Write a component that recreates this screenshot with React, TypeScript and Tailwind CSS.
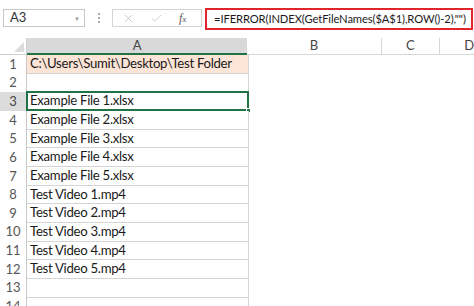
import { X, Check } from "lucide-react";

const ROWS: string[] = [
  "C:\\Users\\Sumit\\Desktop\\Test Folder",
  "",
  "Example File 1.xlsx",
  "Example File 2.xlsx",
  "Example File 3.xlsx",
  "Example File 4.xlsx",
  "Example File 5.xlsx",
  "Test Video 1.mp4",
  "Test Video 2.mp4",
  "Test Video 3.mp4",
  "Test Video 4.mp4",
  "Test Video 5.mp4",
  "",
  "",
];

const font = { fontFamily: "Lato, 'Open Sans', sans-serif" };

export default function App() {
  return (
    <div className="h-[306px] w-[474px] overflow-hidden bg-white text-[#222]" style={font}>
      {/* name box + formula bar */}
      <div className="flex h-[38px] items-start pt-[9px]">
        <div className="ml-[3px] flex h-[18px] w-[82px] items-center justify-between border border-[#c8c8c8] pl-[6px] pr-[4px] text-[13px] text-[#333]">
          <span>A3</span>
          <span className="text-[6px] text-[#999]">▼</span>
        </div>
        <div className="ml-[11px] flex h-[18px] w-[5px] flex-col items-center justify-center gap-[2px]">
          <span className="h-[2px] w-[2px] bg-[#aaa]" />
          <span className="h-[2px] w-[2px] bg-[#aaa]" />
          <span className="h-[2px] w-[2px] bg-[#aaa]" />
        </div>
        <div className="ml-[11px] flex h-[18px] w-[90px] items-center border border-[#d4d4d4]">
          <X size={13} strokeWidth={1.2} className="ml-[9px] text-[#b4b4b4]" />
          <Check size={13} strokeWidth={1.2} className="ml-[15px] text-[#b4b4b4]" />
          <span className="ml-[16px] text-[12px] italic text-[#555]" style={{ fontFamily: "'Liberation Serif', serif" }}>
            f<span className="text-[9px]">x</span>
          </span>
        </div>
        <div className="-mt-[1px] ml-[3px] flex h-[22px] w-[268px] items-center whitespace-nowrap border-2 border-[#e0262c] pl-[7px] text-[11.2px] tracking-[-0.1px] text-[#1a1a1a]">
          =IFERROR(INDEX(GetFileNames($A$1),ROW()-2),"")
        </div>
      </div>

      {/* column headers */}
      <div className="flex h-[17px] text-[13px] text-[#444]">
        <div className="relative w-[27px] border-b border-r border-[#d0d0d0] bg-white">
          <svg className="absolute bottom-[2px] right-[2px]" width="10" height="10" viewBox="0 0 10 10">
            <polygon points="10,0 10,10 0,10" fill="#dcdcdc" />
          </svg>
        </div>
        <div className="flex w-[222px] items-center justify-center border-b-2 border-[#217346] bg-[#d9d9d9]">A</div>
        <div className="flex w-[135px] items-center justify-center border-b border-r border-[#d6d6d6]">B</div>
        <div className="flex w-[59px] items-center justify-center border-b border-r border-[#d6d6d6]">C</div>
        <div className="flex flex-1 items-center border-b border-[#d6d6d6] pl-[24px]">D</div>
      </div>

      {/* rows */}
      {ROWS.map((v, i) => {
        const n = i + 1;
        const selected = n === 3;
        return (
          <div key={n} className="flex h-[18.67px]">
            <div
              className={`flex w-[27px] items-center justify-center border-r border-[#c8c8c8] text-[13px] ${
                selected ? "bg-[#dcdcdc] text-[#444]" : "bg-white text-[#555]"
              }`}
            >
              {n}
            </div>
            <div
              className={`relative flex w-[222px] items-center whitespace-nowrap border-b border-r border-[#d4d4d4] pl-[3px] text-[13.2px] tracking-[-0.3px] text-[#1a1a1a] ${
                n === 1 ? "bg-[#fce4d6]" : "bg-white"
              }`}
            >
              {v}
              {selected && (
                <>
                  <div className="absolute -left-[1px] -top-[1px] bottom-[-1px] right-[-1px] border-2 border-[#217346]" />
                  <div className="absolute -bottom-[3px] -right-[3px] h-[5px] w-[5px] border border-white bg-[#217346]" />
                </>
              )}
            </div>
            <div className="flex-1 bg-white" />
          </div>
        );
      })}
    </div>
  );
}
